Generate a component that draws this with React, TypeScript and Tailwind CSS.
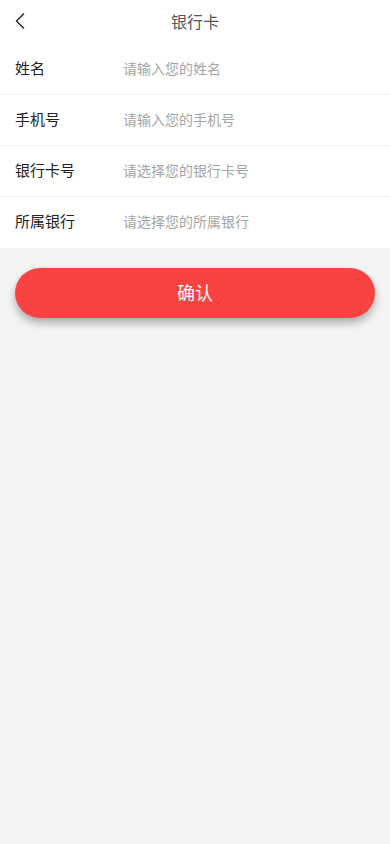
const FIELDS = [
	{ label: "姓名", placeholder: "请输入您的姓名" },
	{ label: "手机号", placeholder: "请输入您的手机号" },
	{ label: "银行卡号", placeholder: "请选择您的银行卡号" },
	{ label: "所属银行", placeholder: "请选择您的所属银行" },
];

const FONT = { fontFamily: '"Noto Sans CJK SC", "Noto Sans", sans-serif' };

export default function App() {
	return (
		<div className="min-h-[844px] bg-[#f4f4f4]" style={FONT}>
			{/* Header */}
			<div className="relative h-[44px] bg-white flex items-center justify-center pb-[2px]">
				<button type="button" className="absolute left-[10px] top-[10px] w-[20px] h-[22px] flex items-center justify-center">
					<svg width="12" height="18" viewBox="0 0 12 18" fill="none">
						<path d="M10 1.5L2.5 9L10 16.5" stroke="#222" strokeWidth="1.4" />
					</svg>
				</button>
				<h1 className="text-[16px] text-[#555] font-normal">银行卡</h1>
			</div>

			{/* Form */}
			<div className="bg-white">
				{FIELDS.map((f, i) => (
					<div
						key={f.label}
						className={`h-[51px] flex items-center px-[15px] pb-[2px] ${i < FIELDS.length - 1 ? "border-b border-[#f0f0f0]" : ""}`}
					>
						<label className="w-[108px] text-[15px] text-[#222]">{f.label}</label>
						<input
							className="flex-1 text-[14px] text-[#333] outline-none placeholder:text-[#a5a5a5] bg-transparent"
							placeholder={f.placeholder}
							style={FONT}
						/>
					</div>
				))}
			</div>

			{/* Submit */}
			<div className="px-[15px] pt-[20px]">
				<button
					type="button"
					className="w-full h-[50px] rounded-full bg-[#f94343] text-white text-[18px] pb-[2px] shadow-[0_5px_8px_rgba(0,0,0,0.3)]"
				>
					确认
				</button>
			</div>
		</div>
	);
}
